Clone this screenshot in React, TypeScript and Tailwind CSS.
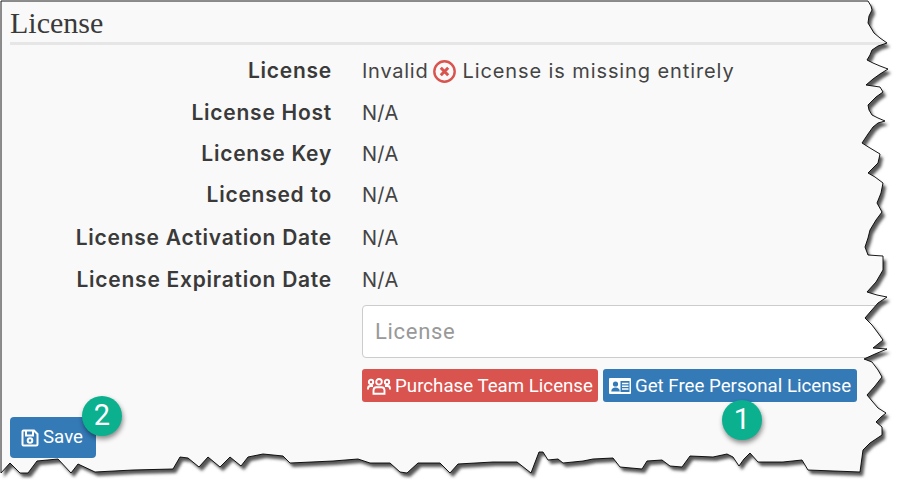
import React from 'react';

// outline of the torn paper, clockwise from the top left
const PAPER =
  'M1 1H868L871 6L872 10L869 16L868 23L871 28L874 33L880 38L887 43L878 46L872 50L870 55L867 60L873 63L880 66L888 69L880 74L873 79L866 85L873 86L880 87L883 92L876 97L868 105L869 110L872 115L878 118L885 121L878 123L873 127L868 134L862 143L870 148L880 154L878 163L873 168L868 173L875 177L883 183L881 193L877 203L882 212L876 220L870 230L868 238L865 247L868 255L883 256L883 270L876 282L867 292L877 295L887 297L878 303L871 311L865 318L872 325L878 333L883 340L878 344L873 348L887 349L875 354L864 359L872 362L878 370L882 377L875 386L867 395L872 401L878 408L886 413L881 417L876 422L882 427L882 435L876 439L870 443L863 450L860 472L808 470L802 460L783 462L758 462L750 453L744 459L739 466L733 457L727 454L713 457L690 456L682 467L670 466L662 460L647 461L642 469L620 467L613 458L593 459L583 461L563 463L558 459L548 460L543 452L539 452L531 473L517 462L493 462L458 464L450 473L440 463L418 463L407 473L400 472L390 463L370 463L358 459L333 461L290 463L283 456L263 454L248 457L241 466L230 457L220 467L208 457L199 467L188 458L180 457L173 469L133 470L95 472L78 464L71 473L58 459L37 461L28 473L20 473L10 463L1 473Z';

const Row = ({ label, className, children }: { label: string; className: string; children: React.ReactNode }) => (
  <div className={`grid grid-cols-[322px_1fr] gap-x-[30px] items-center ${className}`}>
    <div className="text-right font-['Inter',sans-serif] text-[21px] font-semibold tracking-[0.75px] text-[#3a3a3a]">{label}</div>
    <div className="flex items-center font-['Inter',sans-serif] text-[20px] text-[#444]">{children}</div>
  </div>
);

const Badge = ({ n, className }: { n: string; className: string }) => (
  <span className={`absolute w-[40px] h-[40px] rounded-full bg-[#0bb08f] text-white text-[29px] flex items-center justify-center shadow-[1px_3px_5px_rgba(0,0,0,0.45)] ${className}`}>
    {n}
  </span>
);

const NA = () => <span className="tracking-[0.3px]">N/A</span>;

export default function App() {
  return (
    <div className="relative w-[905px] h-[493px] overflow-hidden bg-[#f9f9f9] font-['Roboto',sans-serif] text-[20px]">
      <div className="pl-[10px] pt-[4px]">
        <h2 className="h-[41px] border-b-[3px] border-[#e6e6e6] font-['Liberation_Serif',serif] text-[30px] leading-[38px] text-[#3a3a3a]">
          License
        </h2>
        <div className="mt-[5px]">
          <Row label="License" className="h-[42px]">
            <span className="tracking-[0.75px]">Invalid</span>
            <svg className="ml-[5px] mr-[6px]" width="23" height="23" viewBox="0 0 23 23" fill="none" stroke="#d9534f">
              <circle cx="11.5" cy="11.5" r="10.2" strokeWidth="2.4" />
              <path d="M7.8 7.8L15.2 15.2M15.2 7.8L7.8 15.2" strokeWidth="3" />
            </svg>
            <span className="tracking-[0.9px]">License is missing entirely</span>
          </Row>
          <Row label="License Host" className="h-[41px]"><NA /></Row>
          <Row label="License Key" className="h-[41px]"><NA /></Row>
          <Row label="Licensed to" className="h-[41px]"><NA /></Row>
          <Row label="License Activation Date" className="h-[45px]"><NA /></Row>
          <Row label="License Expiration Date" className="h-[40px]"><NA /></Row>
        </div>
        <div className="ml-[352px] mt-[5px]">
          <input
            placeholder="License"
            className="block w-[600px] h-[53px] px-[12px] bg-white border border-[#ccc] rounded-[4px] text-[22px] tracking-[0.7px] placeholder:text-[#999]"
          />
          <div className="flex gap-[5px] mt-[11px] text-[18.7px] text-white">
            <button className="h-[33px] w-[236px] pt-[1px] flex items-center justify-center gap-[4px] rounded-[3px] bg-[#d9534f]">
              <svg width="24" height="17" viewBox="0 0 24 17" fill="none" stroke="white" strokeWidth="1.9">
                <circle cx="12" cy="3.8" r="2.8" />
                <circle cx="4" cy="4" r="2.2" />
                <circle cx="20" cy="4" r="2.2" />
                <path d="M1 11.5V10.5C1 9 2 8 3.5 8H6M23 11.5V10.5C23 9 22 8 20.5 8H18" />
                <path d="M6.5 15.8V12.5C6.5 10.5 7.5 9.2 9.5 9.2H14.5C16.5 9.2 17.5 10.5 17.5 12.5V15.8Z" />
              </svg>
              Purchase Team License
            </button>
            <button className="h-[33px] w-[254px] pt-[1px] flex items-center justify-center gap-[4px] rounded-[3px] bg-[#337ab7]">
              <svg width="22" height="16" viewBox="0 0 22 16">
                <rect x="0" y="0" width="22" height="16" rx="1" fill="white" />
                <rect x="11.5" y="3" width="9" height="11" fill="#337ab7" />
                <circle cx="6.5" cy="6" r="2.6" fill="#337ab7" />
                <path d="M2.2 13.5C2.5 10.5 4 9.5 6.5 9.5S10.5 10.5 10.8 13.5Z" fill="#337ab7" />
                <path d="M13 5.5H19.5M13 8.3H19.5M13 11H19.5" stroke="white" strokeWidth="1.4" />
              </svg>
              Get Free Personal License
            </button>
          </div>
        </div>
        <button className="mt-[15px] h-[41px] w-[86px] flex items-center justify-center gap-[4px] rounded-[4px] bg-[#337ab7] text-[18.7px] text-white">
          <svg className="-ml-[2px]" width="18" height="18" viewBox="0 0 18 18" fill="none" stroke="white" strokeWidth="2">
            <path d="M2.5 1.5H13L16.5 5V15C16.5 16 16 16.5 15 16.5H2.5C1.8 16.5 1.5 16 1.5 15.5V2.5C1.5 2 1.8 1.5 2.5 1.5Z" />
            <path d="M5 2V6.5H12V2" />
            <circle cx="9" cy="11.5" r="2.3" />
          </svg>
          Save
        </button>
      </div>

      <Badge n="1" className="left-[722px] top-[400px]" />
      <Badge n="2" className="left-[82px] top-[396px]" />

      {/* torn edge, white outside the paper plus its shadow */}
      <svg className="absolute inset-0 pointer-events-none" width="905" height="493" viewBox="0 0 905 493">
        <defs>
          <clipPath id="outside">
            <path clipRule="evenodd" d={`M0 0H905V493H0Z${PAPER}`} />
          </clipPath>
          <filter id="soft" x="-5%" y="-5%" width="110%" height="110%">
            <feGaussianBlur stdDeviation="1.8" />
          </filter>
        </defs>
        <g clipPath="url(#outside)">
          <rect width="905" height="493" fill="white" />
          <path d={PAPER} transform="translate(3 4)" fill="#555" filter="url(#soft)" />
        </g>
        <path d={PAPER} fill="none" stroke="black" strokeWidth="0.9" />
      </svg>
    </div>
  );
}
